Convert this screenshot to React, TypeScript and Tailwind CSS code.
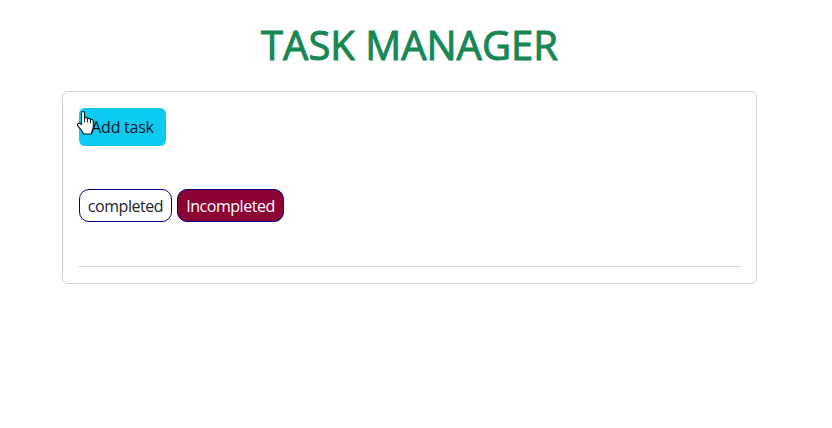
function HandCursor() {
  return (
    <svg className="pointer-events-none absolute -left-[3px] top-[2px]" width="19" height="25" viewBox="0 0 19 25" aria-hidden="true">
      <path
        d="M5.5 14.5V3.2C5.5 .9 8.6 .9 8.6 3.2V8.2C9.2 7.1 11.4 7.3 11.6 8.7C12.4 7.8 14.3 8.2 14.5 9.6C15.5 8.8 17.3 9.5 17.3 11.2V17C17.3 19 15.5 20.6 15.5 24H7.3C7.3 21.5 3.5 18.5 1.7 15.4C.8 13.7 2.7 12.6 4 13.7Z"
        fill="white"
        stroke="#101018"
        strokeWidth="1.1"
        strokeLinejoin="round"
      />
      <path d="M8.6 8.2V12.5M11.6 8.7V12.5M14.5 9.6V13" fill="none" stroke="#101018" strokeWidth="1" />
    </svg>
  );
}

export default function App() {
  return (
    <main className="h-[428px] bg-white px-[62px] pt-[21px] font-['Open_Sans','Noto_Sans',sans-serif] text-base text-[#212529]">
      <h1 className="w-[695px] whitespace-nowrap text-center text-[40px] leading-[48px] font-medium text-[#198754] [-webkit-text-stroke:1px_#198754]">
        TASK MANAGER
      </h1>
      <section className="mt-[22px] h-[193px] w-[695px] rounded-md border border-[#d0d2d2] p-4">
        <div className="relative w-fit">
          <button className="flex h-[38px] w-[87px] items-center justify-center whitespace-nowrap rounded-md bg-[#0dcaf0] tracking-[-0.25px] text-[#10152b]">
            Add task
          </button>
          <HandCursor />
        </div>
        <div className="mt-[43px] flex gap-[5px] tracking-[-0.45px]">
          <button className="flex h-[33px] w-[93px] items-center justify-center whitespace-nowrap rounded-[10px] border border-[#00008b]">
            completed
          </button>
          <button className="flex h-[33px] w-[107px] items-center justify-center whitespace-nowrap rounded-[10px] border border-[#00008b] bg-[#8b0335] text-white">
            Incompleted
          </button>
        </div>
        <hr className="mt-11 border-[#d0d0d0]" />
      </section>
    </main>
  );
}
